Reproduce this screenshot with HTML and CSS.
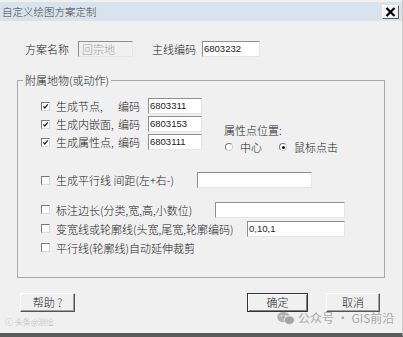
FILE: index.html
```html
<!DOCTYPE html>
<html lang="zh-CN">
<head>
<meta charset="utf-8">
<title>自定义绘图方案定制</title>
<link rel="stylesheet" href="styles.css">
</head>
<body>
<div class="window">
  <div class="titlebar">
    <span class="title">自定义绘图方案定制</span>
    <span class="close"><svg width="11" height="10" viewBox="0 0 11 10"><path d="M1.5 1 L9.5 9 M9.5 1 L1.5 9" stroke="#000" stroke-width="2.2"/></svg></span>
  </div>
  <div class="body">
    <div class="row-top">
      <span class="lbl l1">方案名称</span>
      <span class="field disabled w55">回宗地</span>
      <span class="lbl l2">主线编码</span>
      <span class="field w58">6803232</span>
    </div>
    <fieldset class="group">
      <legend>附属地物(或动作)</legend>
      <div class="upper">
        <div class="checks">
          <div class="crow">
            <span class="cb"><svg width="9" height="9" viewBox="0 0 9 9"><path d="M1.8 4.2 L3.6 6.4 L7.4 1.8" fill="none" stroke="#1a1a1a" stroke-width="1.5"/></svg></span>
            <span class="ctext c62">生成节点,</span><span class="code">编码</span><span class="field w54">6803311</span>
          </div>
          <div class="crow">
            <span class="cb"><svg width="9" height="9" viewBox="0 0 9 9"><path d="M1.8 4.2 L3.6 6.4 L7.4 1.8" fill="none" stroke="#1a1a1a" stroke-width="1.5"/></svg></span>
            <span class="ctext c62">生成内嵌面,</span><span class="code">编码</span><span class="field w54">6803153</span>
          </div>
          <div class="crow">
            <span class="cb"><svg width="9" height="9" viewBox="0 0 9 9"><path d="M1.8 4.2 L3.6 6.4 L7.4 1.8" fill="none" stroke="#1a1a1a" stroke-width="1.5"/></svg></span>
            <span class="ctext c62">生成属性点,</span><span class="code">编码</span><span class="field w54">6803111</span>
          </div>
        </div>
        <div class="pos">
          <div class="line">属性点位置:</div>
          <div class="line radios">
            <span class="rb"></span><span class="rtext r1">中心</span>
            <span class="rb on"></span><span class="rtext">鼠标点击</span>
          </div>
        </div>
      </div>
      <div class="crow rd">
        <span class="cb"></span><span class="ctext c140">生成平行线 间距(左+右-)</span><span class="field w115"></span>
      </div>
      <div class="crow re">
        <span class="cb"></span><span class="ctext c158">标注边长(分类,宽,高,小数位)</span><span class="field w130"></span>
      </div>
      <div class="crow rf">
        <span class="cb"></span><span class="ctext c190">变宽线或轮廓线(头宽,尾宽,轮廓编码)</span><span class="field w98">0,10,1</span>
      </div>
      <div class="crow rf">
        <span class="cb"></span><span class="ctext">平行线(轮廓线)自动延伸裁剪</span>
      </div>
    </fieldset>
    <div class="buttons">
      <span class="btn help">帮助 ?</span>
      <span class="btn ok">确定</span>
      <span class="btn cancel">取消</span>
    </div>
  </div>
  <div class="wm-left">ⓒ 头条@测绘</div>
  <div class="wm-right">
    <svg width="18" height="14" viewBox="0 0 18 14"><ellipse cx="6.5" cy="6" rx="6.2" ry="5.3" fill="#b0b0b0"/><ellipse cx="12.3" cy="9.2" rx="5.2" ry="4.3" fill="#a4a4a4" stroke="#f0f0f0" stroke-width="0.9"/><circle cx="4.4" cy="4.8" r="0.9" fill="#f0f0f0"/><circle cx="8.6" cy="4.8" r="0.9" fill="#f0f0f0"/></svg>
    <span>公众号 · GIS前沿</span>
  </div>
</div>
</body>
</html>
```
FILE: styles.css
```css
* { box-sizing: border-box; }
html, body { margin: 0; padding: 0; background: #f0f0f0; }
.window {
  position: relative;
  width: 403px;
  height: 337px;
  background: #f0f0f0;
  border-bottom: 4px solid #5c5c5c;
  border-right: 1px solid #c8c8c8;
  font-family: "Noto Sans CJK SC", "Liberation Sans", sans-serif;
  font-size: 11px;
  font-weight: 300;
  color: #222;
  padding-top: 2px;
  overflow: hidden;
}
.titlebar {
  height: 19px;
  background: #d9e3ee;
  display: flex;
  align-items: center;
  justify-content: space-between;
  padding: 0 3px 0 2px;
}
.title { color: #444; font-size: 10.5px; line-height: 14px; }
.close {
  width: 17px;
  height: 14px;
  margin-top: 1px;
  display: flex;
  align-items: center;
  justify-content: center;
  background: #f2f2f2;
  border: 1px solid;
  border-color: #fff #5a5a5a #5a5a5a #fff;
}
.body { padding: 0 0 0 17px; }
.row-top {
  display: flex;
  align-items: center;
  margin-top: 20px;
  height: 16px;
  padding-left: 8px;
}
.lbl { line-height: 16px; white-space: nowrap; }
.l1 { width: 53px; }
.l2 { width: 50px; margin-left: 19px; }
.field {
  display: inline-block;
  height: 16px;
  background: #fff;
  border: 1px solid;
  border-color: #8e8e8e #e6e6e6 #e6e6e6 #8e8e8e;
  font-family: "Liberation Sans", Arial, sans-serif;
  font-size: 9.5px;
  font-weight: 400;
  line-height: 14px;
  padding-left: 1px;
  color: #222;
  white-space: nowrap;
}
.field.disabled {
  background: #f0f0f0;
  color: #a0a0a0;
  font-family: "Noto Sans CJK SC", sans-serif;
  font-size: 11px;
  font-weight: 300;
  padding-left: 3px;
}
.w54 { width: 54px; }
.w55 { width: 55px; }
.w58 { width: 58px; }
.w98 { width: 98px; }
.w115 { width: 115px; }
.w130 { width: 130px; }
.group {
  margin: 16px 0 0 0;
  padding: 0;
  width: 368px;
  height: 205px;
  border: 1px solid #a8a8a8;
  min-width: 0;
}
.group legend {
  margin-left: 5px;
  padding: 0 2px;
  line-height: 14px;
  font-size: 11px;
}
.upper { display: flex; margin-top: 10px; }
.checks { display: flex; flex-direction: column; }
.crow {
  display: flex;
  align-items: center;
  height: 18px;
  padding-left: 23px;
  white-space: nowrap;
}
.cb {
  width: 9px;
  height: 9px;
  background: #fff;
  border: 1px solid;
  border-color: #7a7a7a #d8d8d8 #d8d8d8 #7a7a7a;
  display: flex;
  align-items: center;
  justify-content: center;
  margin-right: 6px;
  flex: none;
}
.cb svg { display: block; }
.ctext { line-height: 16px; }
.c62 { width: 62px; }
.c140 { width: 141px; }
.c158 { width: 159px; }
.c190 { width: 191px; }
.code { width: 30px; }
.pos { margin-left: 22px; padding-top: 26px; }
.pos .line { line-height: 14px; height: 14px; }
.radios { display: flex; align-items: center; margin-top: 3px; padding-left: 1px; }
.rb {
  width: 8px;
  height: 8px;
  border-radius: 50%;
  background: #fff;
  border: 1px solid;
  border-color: #7a7a7a #d0d0d0 #d0d0d0 #7a7a7a;
  margin-right: 7px;
  position: relative;
}
.rb.on::after {
  content: "";
  position: absolute;
  left: 1.5px;
  top: 1.5px;
  width: 3px;
  height: 3px;
  border-radius: 50%;
  background: #111;
}
.rtext { line-height: 14px; }
.r1 { width: 39px; }
.rd { margin-top: 17px; }
.re { margin-top: 11px; height: 19px; }
.rf { height: 19px; }
.buttons {
  display: flex;
  margin-top: 15px;
  padding-left: 3px;
}
.btn {
  height: 19px;
  display: flex;
  align-items: center;
  justify-content: center;
  background: #f0f0f0;
  border: 1px solid;
  border-color: #fff #555 #555 #fff;
  box-shadow: inset -1px -1px 0 #a0a0a0;
  line-height: 15px;
  font-size: 11px;
}
.help { width: 55px; }
.ok { width: 61px; margin-left: 172px; border: 1px solid #333; box-shadow: inset 1px 1px 0 #fff, inset -1px -1px 0 #808080; }
.cancel { width: 54px; margin-left: 18px; }
.wm-left {
  position: absolute;
  left: 5px;
  top: 316px;
  font-size: 8px;
  line-height: 12px;
  color: #b8b8b8;
}
.wm-right {
  position: absolute;
  left: 277px;
  top: 310px;
  display: flex;
  align-items: center;
  gap: 3px;
  color: #a8a8a8;
  font-size: 12px;
  font-weight: 400;
  line-height: 16px;
}
```
